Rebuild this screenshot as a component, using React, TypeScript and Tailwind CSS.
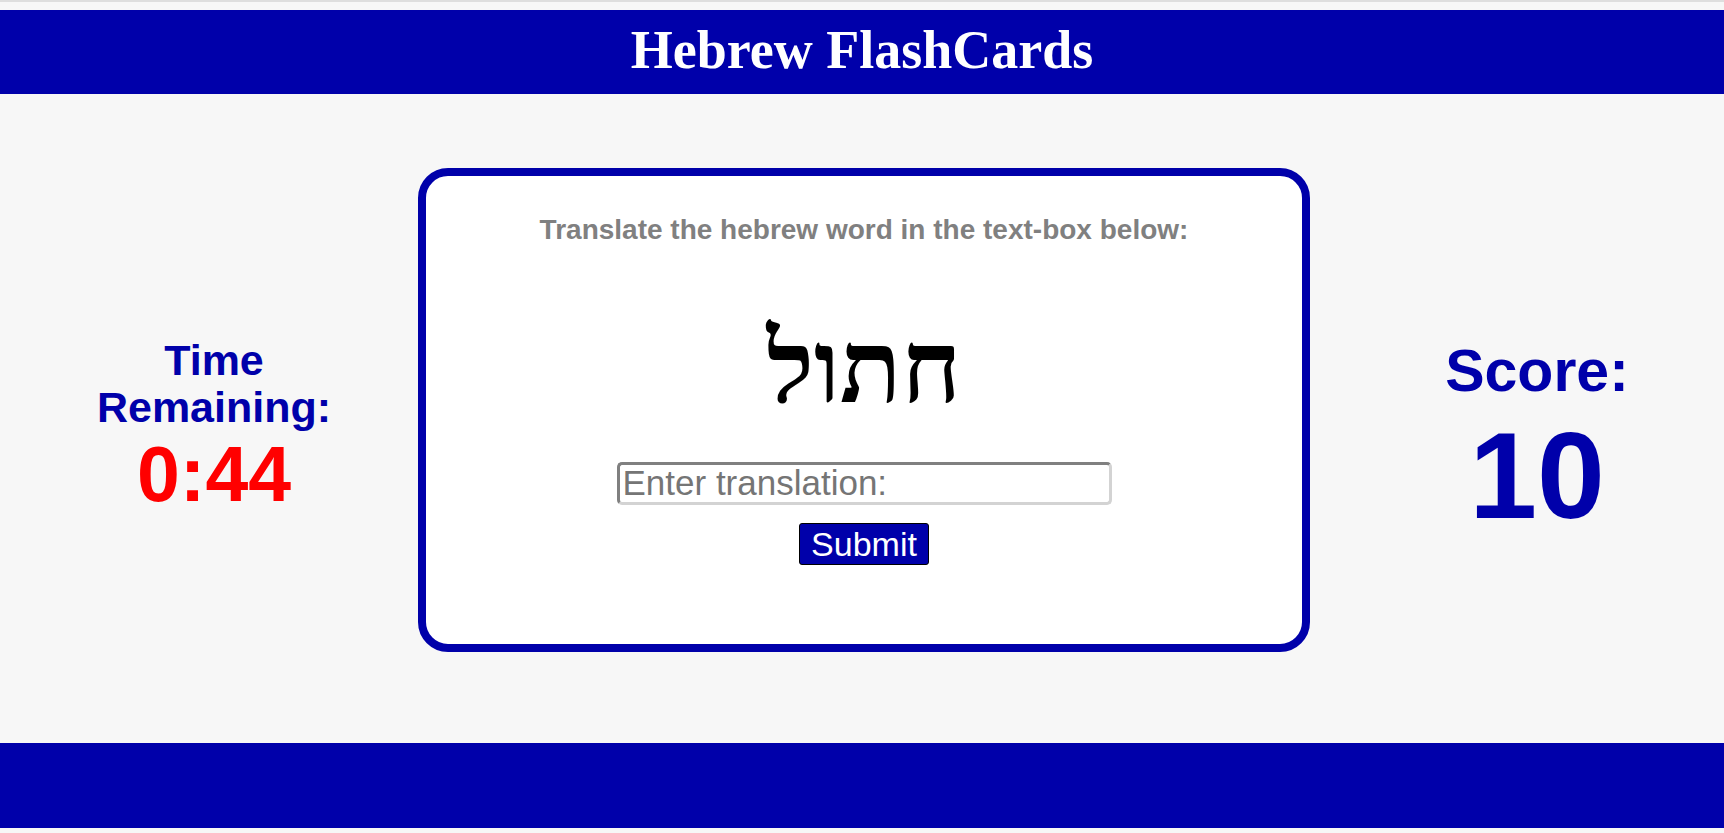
import React, { useState } from "react"

const BLUE = "bg-[#0000aa]"

export default function App() {
  const [answer, setAnswer] = useState("")
  const [score] = useState(10)
  const [time] = useState("0:44")
  const word = "חתול"

  return (
    <div className="flex h-[833px] flex-col overflow-hidden bg-[#f7f7f7] font-['Liberation_Sans',Arial,sans-serif]">
      <div className="h-[2px] bg-[#dedede]" />
      {/* header */}
      <header className={`${BLUE} mt-[8px] h-[84px] pt-[13px] text-center`}>
        <h1 className="font-['Liberation_Serif','Times_New_Roman',serif] text-[54px] leading-none font-bold text-white">
          Hebrew FlashCards
        </h1>
      </header>

      <main className="flex h-[649px]">
        {/* timer */}
        <div className="w-[418px] shrink-0 pl-[10px] pt-[243px] text-center font-bold">
          <div className="text-[43px] leading-[47px] text-[#0000aa]">
            Time
            <br />
            Remaining:
          </div>
          <div className="mt-[5px] text-[77px] leading-none text-[#ff0000]">{time}</div>
        </div>

        {/* card */}
        <div className="mt-[74px] flex h-[484px] w-[892px] shrink-0 flex-col items-center rounded-[30px] border-[8px] border-[#0000aa] bg-white">
          <p className="pt-[38px] text-[28px] leading-[32px] font-bold text-[#808080]">
            Translate the hebrew word in the text-box below:
          </p>
          <div
            dir="rtl"
            className="mt-[72px] font-['Liberation_Serif','DejaVu_Serif',serif] text-[101px] leading-none font-bold text-black"
          >
            {word}
          </div>
          <input
            type="text"
            value={answer}
            onChange={(e) => setAnswer(e.target.value)}
            placeholder="Enter translation:"
            className="mt-[43px] h-[43px] w-[495px] rounded-[5px] border-[3px] border-t-[#808080] border-r-[#d3d3d3] border-b-[#d3d3d3] border-l-[#808080] bg-white pl-[3px] text-[35px] text-black outline-none placeholder:text-[#757575]"
          />
          <button className="mt-[18px] h-[42px] rounded-[3px] border border-black bg-[#0000aa] px-[11px] text-[34px] leading-none text-white">
            Submit
          </button>
        </div>

        {/* score */}
        <div className="flex-1 pl-[40px] pt-[248px] text-center font-bold text-[#0000aa]">
          <div className="text-[59px] leading-none">Score:</div>
          <div className="mt-[14px] text-[122px] leading-none">{score}</div>
        </div>
      </main>

      <footer className={`${BLUE} h-[85px]`} />
      <div className="h-[5px]" />
    </div>
  )
}
